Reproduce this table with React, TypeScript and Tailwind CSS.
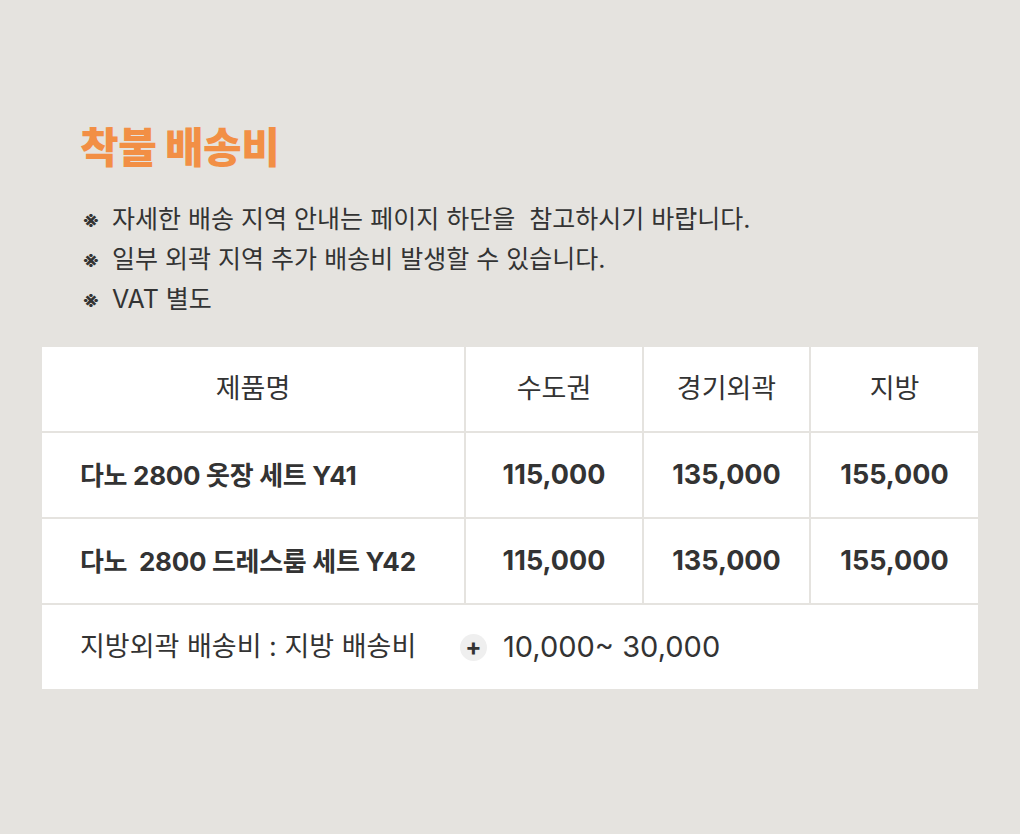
import React from "react";

const font = { fontFamily: 'Inter, "Noto Sans CJK KR", sans-serif' };

const rows = [
  { name: "다노 2800 옷장 세트 Y41", prices: ["115,000", "135,000", "155,000"] },
  { name: "다노  2800 드레스룸 세트 Y42", prices: ["115,000", "135,000", "155,000"] },
];

const notes = [
  "자세한 배송 지역 안내는 페이지 하단을  참고하시기 바랍니다.",
  "일부 외곽 지역 추가 배송비 발생할 수 있습니다.",
  "VAT 별도",
];

export default function App() {
  return (
    <div
      className="w-[1020px] h-[834px] bg-[#e5e3df] text-[#333] px-[42px] pt-[120px]"
      style={font}
    >
      <h1 className="ml-[38px] text-[42px] leading-[56px] font-extrabold text-[#f28f45] tracking-[-0.5px]">
        착불 배송비
      </h1>

      <ul className="ml-[40px] mt-[24px] flex flex-col">
        {notes.map((n) => (
          <li key={n} className="flex items-center h-[40px] text-[25px] whitespace-pre">
            <span className="w-[30px] text-[22px] leading-none font-bold">※</span>
            <span>{n}</span>
          </li>
        ))}
      </ul>

      <div className="mt-[27px] grid grid-cols-[422px_176px_165px_167px] gap-[2px] bg-[#e5e3df]">
        <div className="bg-white h-[84px] flex items-center justify-center text-[27px]">제품명</div>
        <div className="bg-white h-[84px] flex items-center justify-center text-[27px]">수도권</div>
        <div className="bg-white h-[84px] flex items-center justify-center text-[27px]">경기외곽</div>
        <div className="bg-white h-[84px] flex items-center justify-center text-[27px]">지방</div>

        {rows.map((r) => (
          <React.Fragment key={r.name}>
            <div className="bg-white h-[84px] flex items-center pl-[38px] text-[26px] font-bold whitespace-pre tracking-[-0.3px]">
              {r.name}
            </div>
            {r.prices.map((p, i) => (
              <div
                key={i}
                className="bg-white h-[84px] flex items-center justify-center text-[27px] font-bold"
              >
                {p}
              </div>
            ))}
          </React.Fragment>
        ))}

        <div className="col-span-4 bg-white h-[84px] flex items-center pl-[38px]">
          <span className="w-[380px] text-[27px]">지방외곽 배송비 : 지방 배송비</span>
          <span className="w-[27px] h-[27px] rounded-full bg-[#efefef] flex items-center justify-center text-[24px] font-bold leading-none">
            +
          </span>
          <span className="ml-[16px] text-[29px]">10,000~ 30,000</span>
        </div>
      </div>
    </div>
  );
}
